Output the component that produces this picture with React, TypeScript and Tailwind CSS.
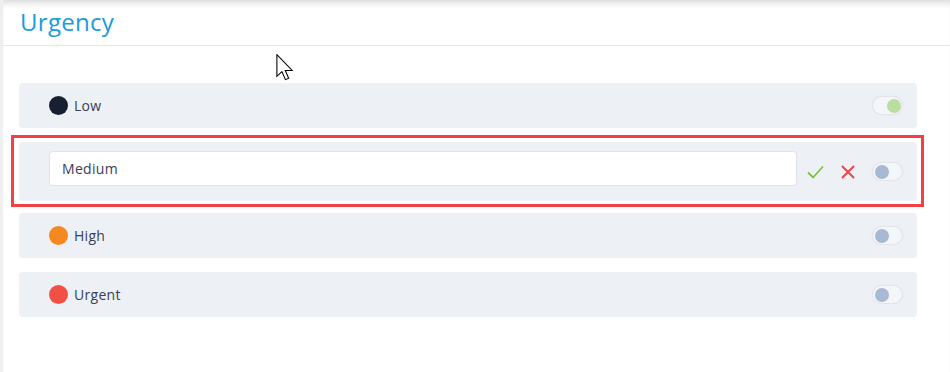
import React from "react";

function Toggle({ on }: { on?: boolean }) {
  return (
    <div className="w-[29px] h-[17px] rounded-full bg-[#f5f6f9] shadow-[0_0_2px_rgba(120,130,150,0.35)] flex items-center px-[1.5px]" style={{ justifyContent: on ? "flex-end" : "flex-start" }}>
      <div className={on ? "w-[14px] h-[14px] rounded-full bg-[#b9dea0]" : "w-[14px] h-[14px] rounded-full bg-[#a7b9d3]"} />
    </div>
  );
}

function Row({ color, label, on }: { color: string; label: string; on?: boolean }) {
  return (
    <div className="h-[45px] rounded-[4px] bg-[#edf0f5] flex items-center pl-[30px] pr-[15px]">
      <div className="w-[19px] h-[19px] rounded-full" style={{ backgroundColor: color }} />
      <span className="ml-[6px] text-[14px] text-[#3a4053] tracking-[0.3px]">{label}</span>
      <div className="flex-1" />
      <Toggle on={on} />
    </div>
  );
}

export default function App() {
  return (
    <div className="w-full h-[372px] bg-[#efefef] flex" style={{ fontFamily: "'Open Sans', 'Noto Sans', sans-serif" }}>
      <div className="relative ml-[3px] flex-1 bg-white shadow-[inset_0_7px_6px_-4px_rgba(0,0,0,0.15)] flex flex-col">
        <div className="h-[46px] border-b border-[#e3e4ea] pl-[17px] flex items-center">
          <h1 className="text-[24px] font-medium leading-none text-[#1a9bdb] tracking-[0.3px] -mt-[2px]">Urgency</h1>
        </div>
        <div className="pt-[37px] pl-[16px] pr-[33px] flex flex-col">
          <Row color="#172031" label="Low" on />
          <div className="mt-[7px] -ml-[8px] -mr-[7px] border-[3px] border-[#f43f43] pl-[5px] pr-[4px] pt-[4px] pb-[3px]">
            <div className="h-[59px] rounded-[4px] bg-[#edf0f5] flex items-center pl-[30px] pr-[15px]">
              <div className="self-start mt-[9px] flex-1 h-[35px] bg-white border border-[#dde2ea] rounded-[4px] flex items-center pl-[12px] text-[14px] text-[#3a4053] tracking-[0.3px]">
                Medium
              </div>
              <svg className="ml-[10px]" width="17" height="14" viewBox="0 0 17 14" fill="none">
                <path d="M1 7.5 L6 12.5 L16 1.5" stroke="#7cc046" strokeWidth="1.8" />
              </svg>
              <svg className="ml-[17px]" width="14" height="14" viewBox="0 0 14 14" fill="none">
                <path d="M1 1 L13 13 M13 1 L1 13" stroke="#f04343" strokeWidth="2" />
              </svg>
              <div className="ml-[18px]">
                <Toggle />
              </div>
            </div>
          </div>
          <div className="mt-[6px]">
            <Row color="#f5891f" label="High" />
          </div>
          <div className="mt-[14px]">
            <Row color="#f15045" label="Urgent" />
          </div>
        </div>
        <svg className="absolute left-[273px] top-[54px]" width="18" height="27" viewBox="0 0 13 20">
          <path d="M0.5 0.5 L0.5 16.5 L4.2 13 L6.8 19 L9.2 18 L6.7 12.2 L11.8 12.2 Z" fill="white" stroke="black" strokeWidth="0.8" strokeLinejoin="miter" />
        </svg>
      </div>
    </div>
  );
}
